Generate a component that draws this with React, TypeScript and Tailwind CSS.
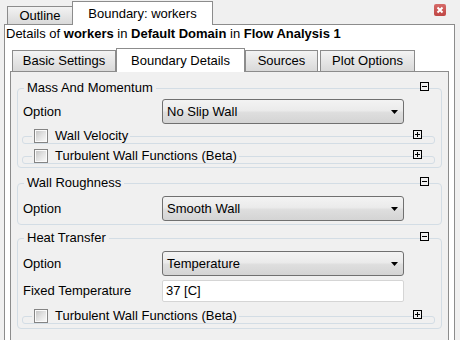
import type { ReactNode } from 'react'

const font = "font-['Liberation_Sans',Arial,sans-serif]"

function Toggle({ open }: { open?: boolean }) {
  return (
    <svg width="9" height="9" viewBox="0 0 9 9" className="block">
      <rect x="0.5" y="0.5" width="8" height="8" fill="#f0f0f0" stroke="#000" />
      <path d="M2 4.5h5" stroke="#000" />
      {!open && <path d="M4.5 2v5" stroke="#000" />}
    </svg>
  )
}

function Checkbox() {
  return (
    <div className="shrink-0 w-[14px] h-[14px] border border-[#848484] bg-[#fafafa] p-[1px]">
      <div className="w-full h-full bg-gradient-to-br from-[#c6c6c6] via-[#e2e2e2] to-[#f7f7f7]" />
    </div>
  )
}

function Dropdown({ value }: { value: string }) {
  return (
    <div className="w-[242px] h-[25px] flex items-center pl-[4px] pr-[5px] border border-[#707070] rounded-[3px] bg-[linear-gradient(to_bottom,#f3f3f3_0%,#ebebeb_45%,#dedede_55%,#d4d4d4_100%)]">
      <span className="flex-1">{value}</span>
      <svg width="7" height="4" viewBox="0 0 7 4" className="block">
        <path d="M0 0h7L3.5 4z" fill="#000" />
      </svg>
    </div>
  )
}

function Row({ label, children, className }: { label: string; children: ReactNode; className?: string }) {
  return (
    <div className={`flex items-center ${className ?? ''}`}>
      <span className="w-[139px]">{label}</span>
      {children}
    </div>
  )
}

function SubFrame({ label, className }: { label: string; className?: string }) {
  return (
    <div className={`-ml-[1px] w-[413px] h-[8px] border border-[#d3dde5] rounded-[3px] ${className ?? ''}`}>
      <div className="-mt-[8px] h-[14px] flex items-center">
        <span className="shrink-0 ml-[9px] px-[2px] flex items-center bg-[#f0f0f0]">
          <Checkbox />
          <span className="ml-[7px] leading-[14px]">{label}</span>
        </span>
        <span className="ml-auto mr-[12px] self-start mt-[1px]">
          <Toggle />
        </span>
      </div>
    </div>
  )
}

function Group({ title, className, children }: { title: string; className?: string; children: ReactNode }) {
  return (
    <div className={`ml-[6px] w-[425px] border border-[#d3dde5] rounded-[4px] px-[5px] ${className ?? ''}`}>
      <div className="-mt-[9px] h-[16px] flex items-center">
        <span className="ml-[1px] px-[3px] bg-[#f0f0f0] leading-[16px]">{title}</span>
        <span className="ml-auto mr-[7px] self-start mt-[2px]">
          <Toggle open />
        </span>
      </div>
      {children}
    </div>
  )
}

export default function App() {
  const tab = 'h-[21px] border border-b-0 border-[#8c8c8c] bg-gradient-to-b from-[#f3f3f3] to-[#d9d9d9] flex items-center justify-center'
  return (
    <div className={`w-[460px] h-[340px] overflow-hidden bg-[#f0f0f0] text-[13px] text-black ${font}`}>
      <div className="flex items-end h-[24px] pl-[7px]">
        <div className="w-[66px] h-[18px] border border-b-0 border-[#8c8c8c] bg-gradient-to-b from-[#f3f3f3] to-[#d9d9d9] flex items-center justify-center">
          Outline
        </div>
        <div className="relative z-10 -ml-[1px] -mb-[1px] w-[141px] h-[24px] border border-b-0 border-[#8c8c8c] bg-white flex items-center justify-center">
          Boundary: workers
        </div>
        <svg width="12" height="12" viewBox="0 0 12 12" className="ml-auto mr-[14px] self-start mt-[4px] block">
          <defs>
            <linearGradient id="cl" x1="0" y1="0" x2="0" y2="1">
              <stop offset="0" stopColor="#d66a68" />
              <stop offset="1" stopColor="#bf4644" />
            </linearGradient>
          </defs>
          <rect x="0" y="0" width="12" height="12" rx="2" fill="url(#cl)" />
          <path d="M3.5 3.5l5 5M8.5 3.5l-5 5" stroke="#fff" strokeWidth="2" />
        </svg>
      </div>

      <div className="ml-[4px] w-[451px] h-[330px] border border-[#8c8c8c] bg-white">
        <div className="pl-[1px] h-[18px] leading-[18px]">
          Details of <b>workers</b> in <b>Default Domain</b> in <b>Flow Analysis 1</b>
        </div>

        <div className="mt-[5px] ml-[5px] pl-[2px] flex items-end h-[23px]">
          <div className={`w-[104px] ${tab}`}>Basic Settings</div>
          <div className="relative z-10 -mb-[1px] w-[129px] h-[24px] border border-b-0 border-[#8c8c8c] bg-white flex items-center justify-center">
            Boundary Details
          </div>
          <div className={`w-[73px] ${tab}`}>Sources</div>
          <div className={`ml-[2px] w-[95px] ${tab}`}>Plot Options</div>
        </div>

        <div className="ml-[5px] w-[439px] h-[300px] border border-[#8c8c8c] bg-[#f0f0f0]">
          <Group title="Mass And Momentum" className="mt-[16px] pb-[3px]">
            <Row label="Option" className="mt-[3px]">
              <Dropdown value="No Slip Wall" />
            </Row>
            <SubFrame label="Wall Velocity" className="mt-[12px]" />
            <SubFrame label="Turbulent Wall Functions (Beta)" className="mt-[12px]" />
          </Group>

          <Group title="Wall Roughness" className="mt-[15px] pb-[3px]">
            <Row label="Option" className="mt-[5px]">
              <Dropdown value="Smooth Wall" />
            </Row>
          </Group>

          <Group title="Heat Transfer" className="mt-[13px] pb-[4px]">
            <Row label="Option" className="mt-[5px]">
              <Dropdown value="Temperature" />
            </Row>
            <Row label="Fixed Temperature" className="mt-[4px]">
              <div className="w-[242px] h-[22px] flex items-center pl-[3px] bg-white border border-[#d5d5d5] rounded-[2px]">
                37 [C]
              </div>
            </Row>
            <SubFrame label="Turbulent Wall Functions (Beta)" className="mt-[14px]" />
          </Group>
        </div>
      </div>
    </div>
  )
}
